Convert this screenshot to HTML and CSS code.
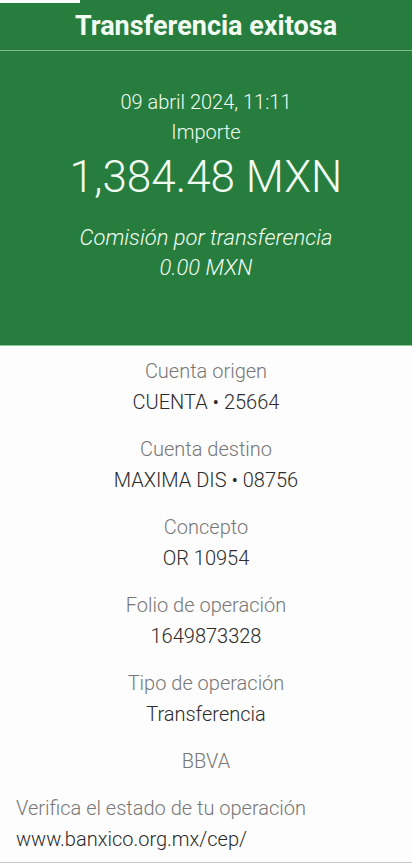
FILE: index.html
```html
<!DOCTYPE html>
<html lang="es">
<head>
  <meta charset="UTF-8">
  <title>Transferencia exitosa</title>
  <link rel="stylesheet" href="styles.css">
</head>
<body>
  <div class="receipt">
    <!-- encabezado -->
    <div class="hero">
      <div class="strip"></div>
      <h1 class="title">Transferencia exitosa</h1>
      <div class="summary">
        <div class="date">09 abril 2024, 11:11</div>
        <div class="label-light">Importe</div>
        <div class="amount">1,384.48 MXN</div>
        <div class="fee">Comisión por transferencia</div>
        <div class="fee">0.00 MXN</div>
      </div>
    </div>

    <!-- detalle -->
    <div class="details">
      <div class="item">
        <span class="label">Cuenta origen</span>
        <span class="value">CUENTA • 25664</span>
      </div>
      <div class="item">
        <span class="label">Cuenta destino</span>
        <span class="value">MAXIMA DIS • 08756</span>
      </div>
      <div class="item">
        <span class="label">Concepto</span>
        <span class="value">OR 10954</span>
      </div>
      <div class="item">
        <span class="label">Folio de operación</span>
        <span class="value">1649873328</span>
      </div>
      <div class="item">
        <span class="label">Tipo de operación</span>
        <span class="value">Transferencia</span>
      </div>
      <div class="item">
        <span class="label">BBVA</span>
      </div>
    </div>

    <div class="verify">
      <div class="label">Verifica el estado de tu operación</div>
      <div class="value">www.banxico.org.mx/cep/</div>
    </div>
  </div>
</body>
</html>
```

FILE: styles.css
```css
body {
  margin: 0;
  font-family: Roboto, "Noto Sans", sans-serif;
  background: #fdfdfd;
}
.receipt {
  width: 412px;
  height: 863px;
  overflow: hidden;
  border-bottom: 1px solid #c8c8c8;
  box-sizing: border-box;
}
.hero {
  background: #277d3e;
  color: #f2fbf2;
  height: 345px;
  border-bottom: 1px solid #8cc79a;
}
.strip {
  width: 80px;
  height: 3px;
  background: #fff;
}
.title {
  margin: 0;
  height: 47px;
  line-height: 46px;
  font-size: 27px;
  font-weight: 700;
  text-align: center;
  border-bottom: 1px solid #7fb98c;
}
.summary {
  display: flex;
  flex-direction: column;
  align-items: center;
  padding-top: 36px;
}
.date,
.label-light {
  font-size: 20px;
  font-weight: 300;
  line-height: 30px;
}
.amount {
  font-size: 44px;
  font-weight: 300;
  line-height: 60px;
  margin-bottom: 16px;
}
.fee {
  font-size: 22px;
  font-weight: 300;
  font-style: italic;
  line-height: 30px;
}
.details {
  display: flex;
  flex-direction: column;
  align-items: center;
  padding-top: 10px;
}
.item {
  display: flex;
  flex-direction: column;
  align-items: center;
  height: 78px;
}
.label {
  color: #777;
  font-size: 20px;
  font-weight: 300;
  line-height: 30px;
}
.value {
  color: #2b2b2b;
  font-size: 20px;
  font-weight: 300;
  line-height: 32px;
}
.verify {
  padding: 0 16px;
  margin-top: -31px;
}
```
